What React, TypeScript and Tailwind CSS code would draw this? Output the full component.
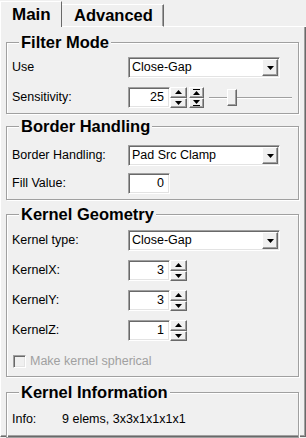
import type { ReactNode } from "react";

const raised =
  "border border-t-white border-l-white border-r-[#696969] border-b-[#696969] bg-[#f0f0f0] shadow-[inset_-1px_-1px_0_#a0a0a0]";
const sunken =
  "border border-t-[#a0a0a0] border-l-[#a0a0a0] border-r-white border-b-white shadow-[inset_1px_1px_0_#696969,inset_-1px_-1px_0_#e3e3e3]";

function Arrow({ dir }: { dir: "up" | "down" }) {
  return (
    <svg width="7" height="4" viewBox="0 0 7 4" className="block">
      {dir === "up" ? <path d="M3.5 0 L7 4 L0 4 Z" fill="#000" /> : <path d="M0 0 L7 0 L3.5 4 Z" fill="#000" />}
    </svg>
  );
}

function Combo({ value }: { value: string }) {
  return (
    <div className={`flex h-[21px] w-[152px] items-stretch bg-white ${sunken}`}>
      <span className="flex flex-1 items-center pl-[3px] leading-none">{value}</span>
      <div className="my-[1px] mr-[1px] flex w-[16px] items-center justify-center">
        <div className={`flex h-full w-full items-center justify-center ${raised}`}>
          <Arrow dir="down" />
        </div>
      </div>
    </div>
  );
}

function Field({ value }: { value: string }) {
  return (
    <div className={`flex h-[21px] w-[42px] items-center justify-end bg-white pr-[5px] leading-none ${sunken}`}>
      {value}
    </div>
  );
}

function SpinButtons() {
  return (
    <div className="flex h-[21px] w-[17px] flex-col">
      <div className={`flex flex-1 items-center justify-center ${raised}`}>
        <Arrow dir="up" />
      </div>
      <div className={`flex flex-1 items-center justify-center ${raised}`}>
        <Arrow dir="down" />
      </div>
    </div>
  );
}

function PageButtons() {
  return (
    <div className="ml-[2px] flex h-[21px] w-[15px] flex-col">
      <div className={`flex flex-1 items-center justify-center ${raised}`}>
        <svg width="7" height="6" viewBox="0 0 7 6" className="block">
          <rect x="0" y="0" width="7" height="1" fill="#000" />
          <path d="M3.5 2 L7 6 L0 6 Z" fill="#000" />
        </svg>
      </div>
      <div className={`flex flex-1 items-center justify-center ${raised}`}>
        <svg width="7" height="6" viewBox="0 0 7 6" className="block">
          <path d="M0 0 L7 0 L3.5 4 Z" fill="#000" />
          <rect x="0" y="5" width="7" height="1" fill="#000" />
        </svg>
      </div>
    </div>
  );
}

function Spin({ value }: { value: string }) {
  return (
    <div className="flex items-center">
      <Field value={value} />
      <SpinButtons />
    </div>
  );
}

function Row({ label, children }: { label: string; children: ReactNode }) {
  return (
    <div className="flex h-[21px] items-center">
      <span className="w-[116px] shrink-0">{label}</span>
      {children}
    </div>
  );
}

function Group({ title, className, children }: { title: string; className: string; children: ReactNode }) {
  return (
    <fieldset className={`border border-[#a0a0a0] shadow-[1px_1px_0_white,inset_1px_1px_0_white] pl-[5px] ${className}`}>
      <legend className="relative ml-[7px] bg-[#f0f0f0] px-[2px] text-[16.5px] font-bold leading-[18px]">{title}</legend>
      {children}
    </fieldset>
  );
}

export default function App() {
  return (
    <div className="h-[438px] w-[306px] bg-[#f0f0f0] font-['Liberation_Sans',Arial,sans-serif] text-[12.5px] text-black">
      {/* Tabs */}
      <div className="flex h-[27px] items-end">
        <div className="flex h-[26px] w-[62px] items-center border-l border-t border-r border-l-white border-t-white border-r-[#696969] pl-[11px] text-[17px] font-bold leading-none">
          Main
        </div>
        <div className="flex h-[23px] w-[102px] items-center border-t border-r border-b border-t-white border-r-[#696969] border-b-white pl-[12px] text-[16.5px] font-bold leading-none shadow-[inset_-1px_0_0_#a0a0a0]">
          Advanced
        </div>
        <div className="h-[1px] flex-1 bg-white" />
      </div>

      {/* Panel */}
      <div className="flex h-[410px] flex-col border-l border-r border-b border-l-white border-r-[#696969] border-b-[#696969] pl-[5px] pr-[6px] pt-[6px] shadow-[inset_-1px_-1px_0_#a0a0a0]">
        <Group title="Filter Mode" className="pt-[6px] pb-[5px]">
          <div className="flex flex-col gap-[9px]">
            <Row label="Use">
              <Combo value="Close-Gap" />
            </Row>
            <Row label="Sensitivity:">
              <Spin value="25" />
              <PageButtons />
              <div className="relative ml-[5px] flex h-[21px] w-[83px] items-center">
                <div className="h-[2px] w-full border-t border-b border-t-[#a0a0a0] border-b-white" />
                <div className={`absolute left-[18px] top-[2px] h-[17px] w-[10px] ${raised}`} />
              </div>
            </Row>
          </div>
        </Group>

        <Group title="Border Handling" className="mt-[3px] pt-[10px] pb-[5px]">
          <div className="flex flex-col gap-[7px]">
            <Row label="Border Handling:">
              <Combo value="Pad Src Clamp" />
            </Row>
            <Row label="Fill Value:">
              <Field value="0" />
            </Row>
          </div>
        </Group>

        <Group title="Kernel Geometry" className="mt-[5px] pt-[7px] pb-[3px]">
          <div className="flex flex-col gap-[9px]">
            <Row label="Kernel type:">
              <Combo value="Close-Gap" />
            </Row>
            <Row label="KernelX:">
              <Spin value="3" />
            </Row>
            <Row label="KernelY:">
              <Spin value="3" />
            </Row>
            <Row label="KernelZ:">
              <Spin value="1" />
            </Row>
            <div className="flex h-[23px] items-center text-[#a0a0a0]">
              <div className="ml-[1px] h-[13px] w-[13px] border border-t-[#a0a0a0] border-l-[#a0a0a0] border-r-white border-b-white shadow-[inset_1px_1px_0_#696969,inset_-1px_-1px_0_#e3e3e3]" />
              <span className="ml-[4px]">Make kernel spherical</span>
            </div>
          </div>
        </Group>

        <Group title="Kernel Information" className="mt-[6px] pt-[8px] pb-[8px]">
          <div className="flex h-[20px] items-center">
            <span className="w-[50px]">Info:</span>
            <span>9 elems, 3x3x1x1x1x1</span>
          </div>
        </Group>
      </div>
    </div>
  );
}
